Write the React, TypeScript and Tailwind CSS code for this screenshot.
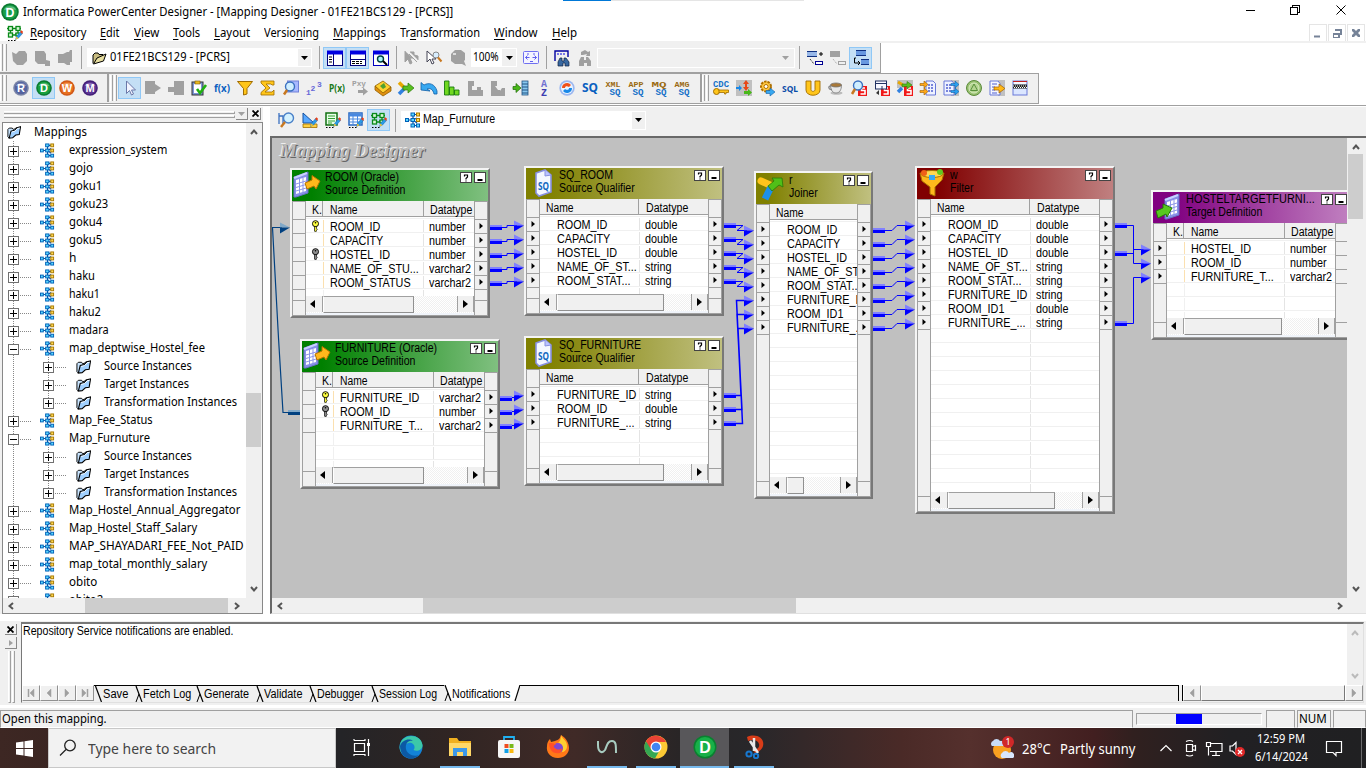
import React, { useLayoutEffect, useRef, useState } from "react";

const UI = "font-['Noto_Sans',sans-serif]";
const SANS = "font-['Liberation_Sans',Arial,sans-serif]";

/* Single-line label squeezed or stretched to a known width. */
function Fit({ w, children, className = "" }: { w: number; children: React.ReactNode; className?: string }) {
  const ref = useRef<HTMLSpanElement>(null);
  const [s, setS] = useState(1);
  useLayoutEffect(() => {
    if (ref.current && ref.current.offsetWidth) setS(w / ref.current.offsetWidth);
  }, [w]);
  return (
    <span className={"block shrink-0 whitespace-nowrap " + className} style={{ width: w }}>
      <span ref={ref} className="inline-block origin-left" style={{ transform: s === 1 ? undefined : `scaleX(${s})` }}>
        {children}
      </span>
    </span>
  );
}

function Ic({ children, s = 16 }: { children: React.ReactNode; s?: number }) {
  return (
    <svg width={s} height={s} viewBox="0 0 16 16" className="block shrink-0 overflow-visible">
      {children}
    </svg>
  );
}

const G = "#a0a0a0";

function Ball({ l, a, b }: { l: string; a: string; b: string }) {
  return (
    <>
      <circle cx="8" cy="8" r="7.8" fill={a} />
      <circle cx="8" cy="8" r="6.3" fill={b} />
      <path d="M2.5 6a6 5 0 0 1 11 0z" fill="#fff" opacity=".3" />
      <text x="8" y="12" textAnchor="middle" fontSize="11" fontWeight="bold" fill="#fff" fontFamily="Liberation Sans">
        {l}
      </text>
    </>
  );
}

const pencil = (
  <>
    <path d="M8.5 14.5 9.5 11.5 13.5 6.5 15.5 8.5 11.5 13z" fill="#2a9be8" stroke="#1766b0" strokeWidth=".5" />
    <path d="M13 7l1.5-1.7 1.5 1.5L15.2 9z" fill="#e8401a" />
    <path d="M8.5 14.5l1-3 2 1.7z" fill="#f5c430" />
  </>
);
const designer = (
  <>
    <g fill="#d8f8d8" stroke="#0a8a1a" strokeWidth="1.3">
      <rect x="1.5" y="1.5" width="4" height="4" />
      <rect x="9" y="1.5" width="4" height="4" />
      <rect x="1.5" y="8" width="4" height="4" />
      <path d="M5.5 3.5H9M5.5 10H9V8M3.5 5.500V8M11 5.500V8M0 3.500h1.500M13 3.500h1" fill="none" />
      <rect x="9" y="8" width="3" height="3" />
    </g>
    {pencil}
    <path d="M1 15.500h1.500M4 15.500h1.500M7 15.500h1.500" stroke="#000" />
  </>
);
const mapIcon = (
  <>
    <path d="M3 8h3M8 3v10M8 2.500h4M8 8l4-2M8 8l4 3M8 13.500h4" stroke="#0a50a0" strokeWidth="1.200" fill="none" />
    <g fill="#59d8ff" stroke="#0060b8">
      <rect x=".5" y="6.500" width="3" height="3" />
      <rect x="6" y="1" width="3.500" height="3" />
      <rect x="6" y="6.500" width="3.500" height="3" />
      <rect x="6" y="12" width="3.500" height="3" />
      <rect x="11.500" y="12" width="3" height="3" />
    </g>
    <g fill="#ffd850" stroke="#a87800">
      <rect x="11.500" y="1" width="3" height="3" />
      <rect x="11.500" y="6.500" width="3" height="3" />
    </g>
  </>
);
const folder = (
  <>
    <path d="M2.500 15L1 13.500V5l1.500-1.500H6L7 5l2-.5L11 2.500" fill="#c8e4ff" stroke="#000" />
    <path d="M2.500 15L4.500 7l4-1L11.500 3l4-1L14 11l-4 .5L6.500 14.500z" fill="#a0d0ff" stroke="#000" strokeWidth="1.200" />
    <path d="M5.500 8l3.500-1 3-3 2.500-.5" stroke="#fff" fill="none" />
  </>
);
const openFolder = (
  <>
    <path d="M1 13.500V5l2-2h3l1 1.500h4V7" fill="#c8bc80" stroke="#000" />
    <path d="M1.500 14 5 8l9-4-2.500 7z" fill="#e8dfa0" stroke="#000" />
  </>
);
const funnel = <path d="M.5 1.500h15L10 8.500v5.500L6.500 15V8.500z" fill="#ffc51a" stroke="#a06c00" />;
const sqText = (t: string) => (
  <>
    <text x="8" y="6.500" textAnchor="middle" fontSize="7.500" textLength="15" lengthAdjust="spacingAndGlyphs" fill="#9a6a10" fontFamily="Liberation Mono" fontWeight="bold">
      {t}
    </text>
    <text x="10" y="15" textAnchor="middle" fontSize="9" textLength="11" lengthAdjust="spacingAndGlyphs" fill="#1470c8" fontFamily="Liberation Mono" fontWeight="bold">
      SQ
    </text>
  </>
);
const blueText = (t: string, c = "#0a60c0", fs = 11) => (
  <text x="8" y="12" textAnchor="middle" fontSize={fs} textLength="16" lengthAdjust="spacingAndGlyphs" fontWeight="bold" fill={c} fontFamily="Noto Sans">
    {t}
  </text>
);
const redS = (
  <>
    <rect x="7" y="6" width="9" height="10" fill="#f01818" />
    <path d="M14 8h-3.500v2.500H14V14H9.500" stroke="#fff" strokeWidth="1.600" fill="none" />
  </>
);

const bar2: React.ReactNode[] = [
  <path d="M4.500 1v12.500l3-3 2 4.500 2-1-2-4h4z" fill="#f2f4ff" stroke="#6b78a8" />,
  <path d="M0 1h10V4l6 4-6 4v2H0z" fill={G} />,
  <path d="M6 1h10v14H6zM0 7h6v5H0z" fill={G} />,
  <><rect x="1" y="2" width="11" height="13" fill="#7d95d8" stroke="#333" /><rect x="3" y="4" width="7" height="9" fill="#fff" /><rect x="4" y="1" width="5" height="3" fill="#e8b820" stroke="#805c00" strokeWidth=".6" /><path d="M6 9l3 4 6-8" fill="none" stroke="#20b010" strokeWidth="2.600" /></>,
  blueText("f(x)"),
  funnel,
  <path d="M1 1h13v4h-2l-1-1H6l4 4-5 4h7l2-2v5H1v-2.500L6 8 1 3z" fill="#ffc51a" stroke="#a06c00" strokeWidth=".8" />,
  <><rect x="4.500" y="1" width="11" height="11" fill="#a8b8ff" stroke="#7080d8" /><circle cx="7" cy="6.500" r="4.500" fill="#cfeeff" stroke="#3a70c0" strokeWidth="1.400" /><path d="M4 10l-3 4.500" stroke="#c87820" strokeWidth="2.500" /></>,
  <><text x="0" y="14.500" fontSize="8" fill="#6868d8" fontFamily="Liberation Mono" fontWeight="bold">1</text><text x="4.500" y="11" fontSize="8" fill="#6868d8" fontFamily="Liberation Mono" fontWeight="bold">2</text><text x="11" y="7" fontSize="8" fill="#6868d8" fontFamily="Liberation Mono" fontWeight="bold">3</text></>,
  blueText("P(x)", "#187818"),
  <><text x="0" y="6" fontSize="7" textLength="14" lengthAdjust="spacingAndGlyphs" fill={G} fontFamily="Liberation Mono" fontWeight="bold">Pxy</text><path d="M6 10h5V7.500l5 4-5 4V13H6z" fill={G} /></>,
  <><path d="M0 6l8-5 8 6-8 7z" fill="#ffd030" stroke="#906000" strokeWidth=".8" /><path d="M0 6v4l8 6 8-5V7l-8 6z" fill="#e09010" stroke="#906000" strokeWidth=".8" /><path d="M5 6l4-3 2 4-3 2z" fill="#50a030" /></>,
  <><path d="M1 2.500l5 5" stroke="#e8a800" strokeWidth="3.500" /><path d="M1 14l5-5" stroke="#3080e0" strokeWidth="3.500" /><path d="M5 6h5V3l6 5-6 5v-3H5z" fill="#58c020" stroke="#2c7808" strokeWidth=".7" /></>,
  <path d="M0 10V2.500L3 5c5-3 11-1 13 6v3h-3c-1-5-4-6-7-5l3 2z" fill="#38a8f0" stroke="#1060a8" strokeWidth=".8" />,
  <><path d="M.5 1h4.500v14H.5zM5.500 7H10v8H5.500zM10.500 10H15v5h-4.500z" fill="#70d820" stroke="#187810" strokeWidth=".9" /></>,
  <path d="M1 1h6v5H5v4h5V7h4v3h2v6H1z" fill={G} />,
  <path d="M1 1h6v5H5l3 4h2v1l2-3h3v8H1z" fill={G} />,
  <><rect x="9" y="1" width="6" height="14" fill="#88c8f0" stroke="#205080" strokeWidth=".8" /><path d="M9 4h6M9 7h6M9 10h6M9 13h6" stroke="#205080" /><path d="M0 6.500h3V3.500L8 8l-5 4.500v-3H0z" fill="#48b818" stroke="#206808" strokeWidth=".7" /></>,
  <><text x="8" y="7" textAnchor="middle" fontSize="10" fontWeight="bold" fill="#7070d0" fontFamily="Liberation Mono">A</text><text x="8" y="15.500" textAnchor="middle" fontSize="10" fontWeight="bold" fill="#3c3cb0" fontFamily="Liberation Mono">Z</text></>,
  <><circle cx="8" cy="8" r="7.700" fill="#9db8f0" /><circle cx="8" cy="8" r="6" fill="#eaf4ff" /><path d="M3 8a5 5 0 0 1 9-3l-2 2c-2-1.500-4-1-4 1z" fill="#f05018" /><path d="M13 8a5 5 0 0 1-9 3l2-2c2 1.500 4 1 4-1z" fill="#1888e8" /></>,
  blueText("SQ", "#0a60c0", 12),
  sqText("XML"),
  sqText("APP"),
  sqText("MQ"),
  sqText("AMG"),
];
const bar3: React.ReactNode[] = [
  <><text x="8" y="7" textAnchor="middle" fontSize="9" textLength="16" lengthAdjust="spacingAndGlyphs" fill="#1470c8" fontWeight="bold" fontFamily="Liberation Mono">CDC</text><circle cx="3.500" cy="11.500" r="3" fill="#ffc51a" stroke="#a06c00" /><path d="M6 10h9.500v2.500H13V14h-1.500v-1.500H6z" fill="#ffc51a" stroke="#a06c00" strokeWidth=".8" /></>,
  <><rect width="16" height="16" fill="#c0c0c0" /><path d="M0 7h3V5l3 3-3 3V9H0z" fill="#1888e8" /><path d="M10 0l3 4h-2v3h2l-3 4-3-4h2V4H7z" fill="#e84818" /><path d="M8 11h4V9l4 3.500-4 3.500v-2H8z" fill="#48b818" /></>,
  <><circle cx="7" cy="6.500" r="5" fill="#ffc840" stroke="#b07000" strokeWidth="2" strokeDasharray="2.500 1" /><circle cx="7" cy="6.500" r="2" fill="#fff" stroke="#b07000" /><path d="M7 10.500h4V8l5 4-5 4v-2.500H7z" fill="#38a8f0" stroke="#1060a8" strokeWidth=".6" /></>,
  blueText("SQL", "#0a4ca8", 9.5),
  <path d="M1 1h5v8.500c0 2.500 4 2.500 4 0V1h5v9c0 7-14 7-14 0z" fill="#ffc51a" stroke="#a06c00" strokeWidth=".9" />,
  <><ellipse cx="8.500" cy="13" rx="6" ry="1.800" fill="#bbb" /><path d="M2.500 5h11c0 5-2 8-5.500 8s-5.500-3-5.500-8z" fill="#e8e8e8" stroke="#777" strokeWidth=".8" /><ellipse cx="8" cy="5" rx="5.500" ry="2" fill="#a87838" stroke="#777" strokeWidth=".8" /><path d="M3 6C0 5.500 0 10 4 9.500" fill="none" stroke="#888" strokeWidth="1.400" /></>,
  <>{redS}<circle cx="7" cy="5.500" r="4.500" fill="#cfeeff" stroke="#3a70c0" strokeWidth="1.400" /><path d="M4 9l-3 5" stroke="#c87820" strokeWidth="2.500" /></>,
  <>{redS}<rect x="1.500" y="1" width="11" height="8" fill="#f8f8ff" stroke="#203060" /><path d="M2 3.500h10M8 6v3" stroke="#203060" /><path d="M2 13l3-3v5z" fill="#333" /></>,
  <><rect width="16" height="8" fill="#c0c0c0" />{redS}<path d="M1 2l5 3" stroke="#e8a800" strokeWidth="3" /><path d="M1 12l4-4" stroke="#3080e0" strokeWidth="3.500" /><path d="M5 4h5V1.500L15 5l-5 4V6.500H5z" fill="#58c020" stroke="#2c7808" strokeWidth=".6" /></>,
  <><path d="M6 1h7l2.500 2.500V15H6z" fill="#eef2ff" stroke="#6878d8" /><path d="M8 5h6M8 8h6M8 11h6" stroke="#5060d0" strokeWidth="1.500" strokeDasharray="2 1" /><path d="M0 3.500h4V1l4 3.500L4 8V5.500H0zM0 10.500h4V8l4 3.500L4 15v-2.500H0z" fill="#ffa818" stroke="#a06000" strokeWidth=".6" /></>,
  <><rect x="8" width="8" height="16" fill="#c0c0c0" /><path d="M1 1h8l2 2.500V15H1z" fill="#eef2ff" stroke="#6878d8" /><path d="M3 5h6M3 8h6M3 11h6" stroke="#5060d0" strokeWidth="1.500" strokeDasharray="2 1" /><path d="M8 3.500h4V1l4 3.500L12 8V5.500H8zM8 10.500h4V8l4 3.500-4 3.500v-2.500H8z" fill="#28a0f0" stroke="#1060a8" strokeWidth=".6" /></>,
  <><circle cx="8" cy="8" r="7.500" fill="#98c070" stroke="#5c8c3c" /><circle cx="8" cy="8" r="5" fill="#b4d490" stroke="#d8ecc0" /><path d="M8 4l3.500 6.500h-7z" fill="none" stroke="#58903c" /></>,
  <><rect x="9" width="7" height="16" fill="#c0c0c0" /><path d="M1 1h8l2 2.500V15H1z" fill="#f4f6ff" stroke="#6878d8" /><path d="M3 4h5M3 7h3M3 10h3M3 13h5" stroke="#5060d0" /><path d="M5 7h5V4l6 4.500L10 13v-3H5z" fill="#ffb818" stroke="#a06000" strokeWidth=".7" /></>,
  <><rect x="1" y="1" width="14" height="14" fill="#dbe6ff" stroke="#6878d8" /><path d="M1 1.500h14" stroke="#c02020" /><path d="M2 3h12" stroke="#fff" strokeWidth="1.500" /><rect x="1" y="4.500" width="14" height="4" fill="#222" /><path d="M1 6h14M2 7.500h13" stroke="#fff" strokeDasharray="1 1" /></>,
];

const ballDefs = [
  { l: "R", a: "#7c86a8", b: "#5563a0" },
  { l: "D", a: "#0a7a30", b: "#18a040" },
  { l: "W", a: "#d05818", b: "#e87020" },
  { l: "M", a: "#442078", b: "#5c3494" },
];
const canvasIcons = [
  <><path d="M0 1v11M0 4h4v8M4 8h3" stroke="#3a70c0" fill="none" strokeWidth="1.300" /><circle cx="9.500" cy="6" r="5" fill="#d4f2ff" stroke="#4a80c8" strokeWidth="1.400" /><path d="M6 10l-4 5" stroke="#c87820" strokeWidth="2.400" /></>,
  <><path d="M1 1v10h11z" fill="#58a8ff" stroke="#1450a0" /><path d="M1 12h14v3.500H1z" fill="#ffd040" stroke="#a07000" strokeWidth=".8" />{pencil}</>,
  <><rect x="1" y="1" width="11" height="12" fill="#e8ffe8" stroke="#107010" strokeWidth="1.500" /><path d="M3 4h7M3 6.500h7M3 9h7M3 11h4" stroke="#30a030" />{pencil}<path d="M1 15.500h1.500M4 15.500h1.500M7 15.500h1.500" stroke="#000" /></>,
  <><rect x="1" y="1" width="13" height="12" fill="#fff" stroke="#2868c0" strokeWidth="1.500" /><path d="M1 3h13" stroke="#4888e0" strokeWidth="3" /><path d="M1 7h13M1 10h13M5 3v10M9.500 3v10" stroke="#4888e0" />{pencil}<path d="M1 15.500h1.500M4 15.500h1.500M7 15.500h1.500" stroke="#000" /></>,
  designer,
];

function Cell({ children, on = false }: { children: React.ReactNode; on?: boolean }) {
  return (
    <div className={"flex h-[22px] w-[23px] shrink-0 items-center justify-center " + (on ? "border border-[#90c8f6] bg-[#c4dff5]" : "")}>
      <Ic>{children}</Ic>
    </div>
  );
}
const Grip = () => (
  <div className="flex shrink-0 gap-px self-stretch py-px">
    <div className="w-[3px] border-r border-l border-r-[#a0a0a0] border-l-white" />
    <div className="w-[3px] border-r border-l border-r-[#a0a0a0] border-l-white" />
  </div>
);
const Sep = ({ className = "" }) => <div className={"h-[23px] w-px shrink-0 bg-[#a0a0a0] " + className} />;
const Down = ({ c = "#000" }) => (
  <svg width="7" height="4" viewBox="0 0 7 4" className="block"><path d="M0 0h7L3.500 4z" fill={c} /></svg>
);
const Chev = ({ d, c = "#555", s = 8 }: { d: "u" | "d" | "l" | "r"; c?: string; s?: number }) => (
  <svg width={s} height={s} viewBox="0 0 8 8" className="block">
    <path d={{ u: "M1 6l3-3.500L7 6", d: "M1 2l3 3.500L7 2", l: "M6 1L2.500 4 6 7", r: "M2 1l3.500 3L2 7" }[d]} fill="none" stroke={c} strokeWidth="2" />
  </svg>
);

const menus: [string, number, number][] = [
  ["Repository", 0, 56], ["Edit", 0, 20], ["View", 0, 25], ["Tools", 0, 27], ["Layout", 0, 36],
  ["Versioning", 6, 55], ["Mappings", 0, 53], ["Transformation", 2, 80], ["Window", 0, 44], ["Help", 0, 25],
];

function TopBars() {
  return (
    <div className={"flex h-[107px] shrink-0 flex-col bg-white text-[12px] leading-[16px] text-black " + UI}>
      <div className="flex h-[24px] items-start">
        <div className="flex h-[24px] w-[563px] items-center pl-px">
          <Ic s={18}><Ball l="D" a="#0a7a30" b="#18a048" /></Ic>
          <Fit w={430} className="pl-[4px]">Informatica PowerCenter Designer - [Mapping Designer - 01FE21BCS129 - [PCRS]]</Fit>
        </div>
        <div className="h-px w-[48px] bg-[#0078d7]" />
        <div className="h-px w-[193px] bg-[#e5e5e5]" />
        <svg width="120" height="20" viewBox="0 0 120 20" className="ml-auto block" shapeRendering="crispEdges">
          <g stroke="#000" fill="none">
            <path d="M-1 10.500h10M44.500 7.500h7v7h-7zM46.500 7.500v-2h7v7h-2" />
            <path d="M90.500 5.500l9 9M99.500 5.500l-9 9" shapeRendering="auto" />
          </g>
        </svg>
      </div>
      <div className="flex h-[17px] items-center pl-[7px]">
        <Ic>{designer}</Ic>
        <div className="flex gap-[14px] pl-[7px]">
          {menus.map(([t, u, w]) => (
            <Fit key={t} w={w}>
              {t.slice(0, u)}
              <span className="underline underline-offset-2">{t[u]}</span>
              {t.slice(u + 1)}
            </Fit>
          ))}
        </div>
        <div className="ml-auto flex gap-px pr-px">
          {["M4 10.500h6v2H4z", "M6 4h7v6h-2V6H6zM4 8h7v5H4zM5 10v2h4v-2z", "M4 4h2l2 2 2-2h2v2l-2 2 2 2v2h-2l-2-2-2 2H4v-2l2-2-2-2z"].map((d) => (
            <div key={d} className="flex h-[18px] w-[18px] items-center justify-center border border-[#e5e5e5]">
              <Ic><path d={d} fill="#768398" fillRule="evenodd" /></Ic>
            </div>
          ))}
        </div>
      </div>
      <div className="h-[2px] shrink-0 bg-[#f0f0f0]" />
      <div className="flex h-[29px] w-[881px] shrink-0 items-center border-r border-[#a0a0a0] bg-[#f0f0f0]">
        <Grip />
        <div className="flex gap-[7px] pl-[4px]">
          <Ic><path d="M1 2l4 2 3-3h6l2 3v7l-4 4H6l-4-4z" fill={G} /></Ic>
          <Ic><path d="M1 1h9l2 3v6l4 1v5h-5v-2H4l-3-3z" fill={G} /></Ic>
          <Ic><path d="M1 4h5l4-2h2l1-2h2v12h-2v3h-3l-3-2H1z" fill={G} /></Ic>
        </div>
        <Sep className="mx-[5px] ml-[8px]" />
        <div className="flex h-[19px] w-[225px] items-center border border-white bg-white pl-[4px]">
          <Ic>{openFolder}</Ic>
          <Fit w={120} className="-mt-[2px] ml-[2px]">01FE21BCS129 - [PCRS]</Fit>
          <div className="ml-auto flex h-[17px] w-[13px] items-center justify-center bg-[#f0f0f0]"><Down /></div>
        </div>
        <Sep className="mr-[3px] ml-[7px]" />
        <Cell on><rect x=".5" y="1.500" width="15" height="14" fill="#fff" stroke="#00007c" /><path d="M0 2.500h16" stroke="#0000e0" strokeWidth="4" /><path d="M6.500 4v12" stroke="#00007c" /><path d="M2 7h3M2 9.500h3M2 12h3" stroke="#000" /></Cell>
        <Cell on><rect x=".5" y="1.500" width="15" height="14" fill="#fff" stroke="#00007c" /><path d="M0 2.500h16" stroke="#0000e0" strokeWidth="4" /><path d="M0 9.500h16" stroke="#00007c" /><path d="M2 11.500h10M2 13.500h10" stroke="#000" strokeDasharray="3 1" /></Cell>
        <Cell><rect x=".5" y="1.500" width="15" height="14" fill="#fff" stroke="#0000c0" /><path d="M0 2.500h16" stroke="#0000e0" strokeWidth="4" /><circle cx="7.500" cy="9" r="3" fill="#a8f8f8" stroke="#004040" strokeWidth="1.400" /><path d="M10 11l4 4" stroke="#000" strokeWidth="2" /></Cell>
        <Sep className="mr-[2px] ml-[4px]" />
        <Cell><path d="M2 1v11l3-3 2 5 2-1-2-5h3L6 4l8 8M7 2h4v3l4 1v4" fill={G} stroke={G} /></Cell>
        <Cell><path d="M1 1v11l3-3 2 5 2-1-2-4h4z" fill="#fff" stroke="#445" /><circle cx="10" cy="5" r="3" fill="#d8eeff" stroke="#888" /><path d="M12 7.500l3.500 4" stroke="#c87820" strokeWidth="2" /></Cell>
        <div className="w-px" />
        <Cell><path d="M5 0h6l4 3v7l-1 1 2 5-4-2H5l-4-3V4z" fill={G} /><path d="M3 3h3v2H3z" fill="#ddd" /></Cell>
        <div className="ml-[2px] flex h-[19px] w-[46px] items-center bg-white pl-[2px]">
          <Fit w={26} className="-mt-[2px]">100%</Fit>
          <div className="mr-px ml-auto flex h-[17px] w-[14px] items-center justify-center bg-[#f0f0f0]"><Down /></div>
        </div>
        <div className="w-[2px]" />
        <Cell><rect x=".5" y="1.500" width="15" height="12" rx="1" fill="#f4f4ff" stroke="#7070f0" /><path d="M2.500 7.500h4M9.500 7.500h4M4.500 5.500l-2 2 2 2M11.500 5.500l2 2-2 2M4 4h2M10 4h2M7 11.500h3" stroke="#6060f0" fill="none" /></Cell>
        <Sep className="mr-[3px] ml-[4px]" />
        <Cell><path d="M1 11V1h13v6" fill="none" stroke="#0000a0" strokeWidth="1.400" /><path d="M3 4h9" stroke="#0000e0" strokeDasharray="2 1" /><path d="M4 16v-4l2-4h2v3h2V8h2l3 4v4h-4v-3h-2v3z" fill="#3868a0" stroke="#102040" strokeWidth=".7" /></Cell>
        <Cell><path d="M2 16v-5l2-4h3v3h2V7h2l3 4v5h-4v-3H7v3zM4 5V2l4-2 3 2 2-1v5H9l1-2-4 1z" fill={G} /></Cell>
        <div className="ml-[1px] flex h-[20px] w-[198px] items-center justify-end border border-white pr-[5px]"><Down c="#a0a0a0" /></div>
        <Sep className="mr-[3px] ml-[4px]" />
        <Cell><rect x="0" y="1" width="10" height="6" fill="#98b8e8" /><path d="M0 1.500h10M0 6.500h10" stroke="#103080" /><path d="M12 4h4M14 2v4" stroke="#000" /><path d="M3 9l4 5" stroke="#000" strokeDasharray="1 1" /><rect x="8.500" y="11.500" width="7" height="3" fill="#fff" stroke="#000090" /></Cell>
        <Cell><rect x="0" y="1" width="10" height="6" fill={G} /><path d="M3 9l4 5" stroke={G} strokeDasharray="1 1" /><rect x="8.500" y="11.500" width="7" height="3" fill="none" stroke={G} /></Cell>
        <Cell on><rect x="3" y="0" width="10" height="6" fill="#6898e0" /><path d="M3 .5h10M3 5.500h10" stroke="#103080" /><path d="M3 8H1.500v5H7M5 11l2 2-2 2" stroke="#000" fill="none" /><rect x="8" y="9" width="8" height="6" fill="#6898e0" /><path d="M8 9.500h8M8 14.500h8" stroke="#103080" /></Cell>
      </div>
      <div className="h-px w-[881px] shrink-0 bg-[#a0a0a0]" />
      <div className="flex h-[31px] w-[1039px] shrink-0 items-center border-t border-r border-b border-[#a0a0a0] bg-[#f0f0f0] pb-px">
        <Grip />
        <div className="flex w-[100px] pl-[2px]">
          {ballDefs.map((b, i) => (
            <Cell key={b.l} on={i === 1}><Ball {...b} /></Cell>
          ))}
        </div>
        <div className="h-full w-[2px] shrink-0 bg-[#a0a0a0]" />
        <div className="ml-px flex self-stretch"><Grip /></div>
        <div className="flex w-[583px] shrink-0 pl-[1px]">
          {bar2.map((c, i) => (
            <Cell key={i} on={i === 0}>{c}</Cell>
          ))}
        </div>
        <div className="h-full w-[2px] shrink-0 bg-[#a0a0a0]" />
        <div className="flex self-stretch"><Grip /></div>
        <div className="flex">
          {bar3.map((c, i) => (
            <Cell key={i}>{c}</Cell>
          ))}
        </div>
      </div>
      <div className="h-px shrink-0 bg-white" />
      <div className="h-px shrink-0 bg-[#a0a0a0]" />
    </div>
  );
}

/* label, width, level, expanded */
const tree: [string, number, number, boolean?][] = [
  ["expression_system", 98, 1], ["gojo", 24, 1], ["goku1", 33, 1], ["goku23", 39, 1], ["goku4", 33, 1], ["goku5", 33, 1],
  ["h", 7, 1], ["haku", 26, 1], ["haku1", 31, 1], ["haku2", 32, 1], ["madara", 40, 1],
  ["map_deptwise_Hostel_fee", 136, 1, true], ["Source Instances", 88, 2], ["Target Instances", 85, 2], ["Transformation Instances", 133, 2],
  ["Map_Fee_Status", 84, 1], ["Map_Furnuture", 81, 1, true],
  ["Source Instances", 88, 2], ["Target Instances", 85, 2], ["Transformation Instances", 133, 2],
  ["Map_Hostel_Annual_Aggregator", 171, 1], ["Map_Hostel_Staff_Salary", 128, 1], ["MAP_SHAYADARI_FEE_Not_PAID", 174, 1],
  ["map_total_monthly_salary", 138, 1], ["obito", 28, 1], ["obito2", 34, 1],
];

function TreeRow({ t, w, level, open, last }: { t: string; w: number; level: number; open?: boolean; last?: boolean }) {
  const pw = level === 1 ? 37 : 73;
  return (
    <div className="flex h-[18px] shrink-0 items-center">
      <svg width={pw} height="18" viewBox={`0 0 ${pw} 18`} className="block shrink-0" shapeRendering="crispEdges">
        <path d="M10.500 0v18" stroke="#888" strokeDasharray="1 1" />
        {level === 2 && <path d={last ? "M45.500 0v9" : "M45.500 0v18"} stroke="#888" strokeDasharray="1 1" />}
        <g transform={level === 2 ? "translate(35 0)" : undefined}>
          <path d="M17 10.500h12" stroke="#888" strokeDasharray="1 1" />
          <rect x="5.500" y="5.500" width="10" height="10" fill="#fff" stroke="#707070" />
          <path d={open ? "M7 10.500h7" : "M7 10.500h7M10.500 7v7"} stroke="#000" />
        </g>
      </svg>
      <svg width="15" height="15" viewBox="0 0 16 16" className="block shrink-0">{level === 1 ? mapIcon : folder}</svg>
      <Fit w={w} className={"-mt-[2px] " + (level === 1 ? "ml-[14px]" : "ml-[13px]")}>{t}</Fit>
    </div>
  );
}

function TreePanel() {
  return (
    <div className={"flex w-[263px] shrink-0 flex-col bg-[#f0f0f0] pl-[2px] text-[12px] leading-[17px] text-black " + UI}>
      <div className="flex h-[15px] shrink-0 items-center pb-px pl-[2px]">
        <div className="flex w-[231px] flex-col gap-px">
          <div className="h-[3px] border-t border-r border-b border-t-white border-r-[#a0a0a0] border-b-[#a0a0a0]" />
          <div className="h-[3px] border-t border-r border-b border-t-white border-r-[#a0a0a0] border-b-[#a0a0a0]" />
        </div>
        <div className="ml-px flex h-[12px] w-[12px] items-center justify-center border-r border-b border-[#888]"><Down c="#a0a0a0" /></div>
        <div className="ml-[2px] flex h-[12px] w-[11px] items-center justify-center border-r border-b border-[#888]">
          <svg width="7" height="7" viewBox="0 0 7 7" className="block"><path d="M.5.5l6 6M6.500.5l-6 6" stroke="#000" strokeWidth="1.800" /></svg>
        </div>
      </div>
      <div className="flex h-[492px] flex-col border border-[#888]">
        <div className="flex h-[475px] shrink-0">
          <div className="flex w-[243px] flex-col overflow-hidden bg-white">
            <div className="flex h-[18px] shrink-0 items-center pl-[4px]">
              <svg width="14" height="14" viewBox="0 0 16 16" className="block">{folder}</svg>
              <Fit w={53} className="-mt-[2px] ml-[13px]">Mappings</Fit>
            </div>
            {tree.map(([t, w, l, o], i) => (
              <TreeRow key={i} t={t} w={w} level={l} open={o} last={t.startsWith("Transf")} />
            ))}
          </div>
          <div className="flex w-[15px] flex-col items-center bg-[#f0f0f0] py-[5px]">
            <Chev d="u" />
            <div className="mt-[257px] h-[54px] w-[15px] shrink-0 bg-[#cdcdcd]" />
            <div className="flex grow items-end"><Chev d="d" /></div>
          </div>
        </div>
        <div className="flex h-[15px] items-center pl-[4px]">
          <Chev d="l" />
          <div className="ml-[70px] h-[15px] w-[143px] bg-[#cdcdcd]" />
          <div className="ml-[5px]"><Chev d="r" /></div>
        </div>
      </div>
    </div>
  );
}

const themes: Record<string, string> = {
  green: "bg-[linear-gradient(90deg,#008000_10%,#80c080)]",
  olive: "bg-[linear-gradient(90deg,#808000_10%,#c0c080)]",
  red: "bg-[linear-gradient(90deg,#800000_10%,#c08080)]",
  purple: "bg-[linear-gradient(90deg,#800080_10%,#c080c0)]",
};

const tableGlyph = (x: number) => (
  <g transform={`translate(${x} 0)`}>
    <path d="M1 7l14-5v21L3 27H1z" fill="#8890e8" stroke="#6870c8" />
    <path d="M3 10l10-3v14L3 24z" fill="#fff" />
    <path d="M3 14l10-3M3 17.500l10-3M3 21l10-3M6.500 9v14M10 8v14" stroke="#8c96e8" />
    <path d="M1 8l13-5" stroke="#c8d0ff" strokeWidth="2" />
  </g>
);
const nodeIcons: Record<string, React.ReactNode> = {
  source: <>{tableGlyph(1)}<path d="M13 13l7-3V5.500l8 5.500-4 8-2-3-7 3z" fill="#ffb81c" stroke="#b87400" /></>,
  target: <>{tableGlyph(11)}<path d="M3 19l7-3v-4l9 4-5 9-1-3-8 4z" fill="#58c820" stroke="#287808" /></>,
  sq: <><path d="M10 5l9-3 6 5v17L13 28l-3-3z" fill="#f4f8ff" stroke="#8890e0" strokeWidth="1.600" /><path d="M19 2v6l6-1" fill="#b8c4ff" stroke="#8890e0" /><text x="17.500" y="22" textAnchor="middle" fontSize="11" textLength="11" lengthAdjust="spacingAndGlyphs" fontWeight="bold" fill="#1068c0" fontFamily="Noto Sans">SQ</text></>,
  joiner: <><path d="M5 8l9 4" stroke="#ffc41c" strokeWidth="7" strokeLinecap="round" /><path d="M15 14L9 26" stroke="#1c90e8" strokeWidth="7" /><path d="M12 13l6-5-2-3h10l1 9-4-2-7 6z" fill="#50c018" stroke="#287808" strokeWidth=".8" /></>,
  filter: <><path d="M3 5h24l-2 7-7 7v9l-5-2v-7L5 13z" fill="#ffb81c" stroke="#a87000" /><ellipse cx="15" cy="6" rx="11" ry="3.500" fill="#ffd850" stroke="#a87000" /><circle cx="7" cy="5" r="3" fill="#f06018" /><circle cx="23" cy="4" r="3" fill="#60c820" /><rect x="12" y="7" width="6" height="5" fill="#38a8f0" /></>,
};

type Col = [string, string, string?];
interface NodeDef {
  x: number; y: number; w: number; h: number; title: string; sub: string; theme: string; icon: string;
  inPorts: boolean; outPorts: boolean; keys: boolean; type: boolean; thumb: number; rows: Col[];
}
const R: Record<string, Col> = {
  room: ["ROOM_ID", "double"], cap: ["CAPACITY", "double"], hostel: ["HOSTEL_ID", "double"],
  nos: ["NAME_OF_ST...", "string"], rs: ["ROOM_STAT...", "string"],
};
const nodes: NodeDef[] = [
  { x: 290, y: 168, w: 200, h: 150, title: "ROOM (Oracle)", sub: "Source Definition", theme: "green", icon: "source", inPorts: false, outPorts: true, keys: true, type: true, thumb: 91,
    rows: [["ROOM_ID", "number", "y"], ["CAPACITY", "number"], ["HOSTEL_ID", "number", "g"], ["NAME_OF_STU...", "varchar2"], ["ROOM_STATUS", "varchar2"]] },
  { x: 300, y: 339, w: 200, h: 150, title: "FURNITURE (Oracle)", sub: "Source Definition", theme: "green", icon: "source", inPorts: false, outPorts: true, keys: true, type: true, thumb: 91,
    rows: [["FURNITURE_ID", "varchar2", "y"], ["ROOM_ID", "number", "g"], ["FURNITURE_T...", "varchar2"]] },
  { x: 524, y: 166, w: 200, h: 150, title: "SQ_ROOM", sub: "Source Qualifier", theme: "olive", icon: "sq", inPorts: true, outPorts: true, keys: false, type: true, thumb: 107,
    rows: [R.room, R.cap, R.hostel, R.nos, R.rs] },
  { x: 524, y: 336, w: 200, h: 150, title: "SQ_FURNITURE", sub: "Source Qualifier", theme: "olive", icon: "sq", inPorts: true, outPorts: true, keys: false, type: true, thumb: 107,
    rows: [["FURNITURE_ID", "string"], ["ROOM_ID", "double"], ["FURNITURE_...", "string"]] },
  { x: 754, y: 171, w: 119, h: 328, title: "r", sub: "Joiner", theme: "olive", icon: "joiner", inPorts: true, outPorts: true, keys: false, type: false, thumb: 17,
    rows: [R.room, R.cap, R.hostel, R.nos, R.rs, ["FURNITURE_ID", ""], ["ROOM_ID1", ""], ["FURNITURE_...", ""]] },
  { x: 915, y: 166, w: 200, h: 348, title: "w", sub: "Filter", theme: "red", icon: "filter", inPorts: true, outPorts: true, keys: false, type: true, thumb: 107,
    rows: [R.room, R.cap, R.hostel, R.nos, R.rs, ["FURNITURE_ID", "string"], ["ROOM_ID1", "double"], ["FURNITURE_...", "string"]] },
  { x: 1151, y: 190, w: 200, h: 150, title: "HOSTELTARGETFURNI...", sub: "Target Definition", theme: "purple", icon: "target", inPorts: true, outPorts: false, keys: true, type: true, thumb: 98,
    rows: [["HOSTEL_ID", "number"], ["ROOM_ID", "number"], ["FURNITURE_T...", "varchar2"]] },
];

const Sq = ({ children, className = "scale-x-[0.88]" }: { children: React.ReactNode; className?: string }) => (
  <span className={"block w-max origin-left whitespace-nowrap " + className}>{children}</span>
);

function PortCol({ n, on }: { n: number; on: boolean }) {
  return (
    <div className="flex w-[14px] shrink-0 flex-col border-x border-t border-[#a0a0a0] bg-[#f0f0f0]">
      <div className="h-[18px] shrink-0 border-b border-[#a0a0a0]" />
      {Array.from({ length: n }, (_, i) => (
        <div key={i} className="flex h-[14px] shrink-0 items-center justify-center border-b border-[#a0a0a0]">
          {on && <svg width="4" height="6" viewBox="0 0 4 6" className="mb-[1px] block"><path d="M.5 0L4 3 .5 6z" fill="#000" /></svg>}
        </div>
      ))}
      <div className="grow border-b border-[#a0a0a0]" />
      <div className="h-[15px] shrink-0 border-b border-[#a0a0a0]" />
    </div>
  );
}

const SmallBtn = ({ d }: { d: React.ReactNode }) => (
  <div className="flex h-[11px] w-[12px] items-center justify-center border border-[#444] bg-white">
    <svg width="8" height="8" viewBox="0 0 8 8" className="block">{d}</svg>
  </div>
);

function NodeBox({ n }: { n: NodeDef }) {
  const bodyRows = Math.ceil((n.h - 72) / 14);
  return (
    <div
      className={"absolute flex flex-col border-t-2 border-r-2 border-b-2 border-l-2 border-t-[#f4f4f4] border-r-[#787878] border-b-[#787878] border-l-[#f4f4f4] bg-[#f0f0f0] text-[12px] leading-[13px] text-black " + SANS}
      style={{ left: n.x - 272, top: n.y - 138, width: n.w, height: n.h }}
    >
      <div className={"flex h-[31px] shrink-0 " + themes[n.theme]}>
        <svg width="30" height="30" viewBox="0 0 30 30" className="block shrink-0">{nodeIcons[n.icon]}</svg>
        <div className="min-w-0 grow pt-px pl-[3px]">
          <Sq className={n.icon === "target" ? "scale-x-[0.91]" : "scale-x-[0.88]"}>{n.title}</Sq>
          <Sq>{n.sub}</Sq>
        </div>
        <div className="flex shrink-0 gap-[2px] pt-[2px] pr-[2px]">
          <SmallBtn d={<path d="M2.500 2.500V1h3v2L4 4.500V5.500M4 6.500v1" stroke="#000" strokeWidth="1.200" fill="none" />} />
          <SmallBtn d={<path d="M1.500 6h5" stroke="#000" strokeWidth="2" />} />
        </div>
      </div>
      <div className="flex min-h-0 grow">
        <PortCol n={n.rows.length} on={n.inPorts} />
        <div className="flex min-w-0 grow flex-col overflow-hidden bg-white">
          <div className="flex h-[16px] shrink-0 items-center border-b border-[#a0a0a0] bg-[#f0f0f0]">
            {n.keys && <div className="h-full w-[17px] shrink-0 border-r border-[#a0a0a0] pt-[3px] pl-[6px]"><Sq>K.</Sq></div>}
            <div className={"h-full shrink-0 overflow-hidden pt-[3px] " + (n.keys ? "w-[101px] border-r border-[#a0a0a0] pl-[7px]" : n.type ? "w-[99px] border-r border-[#a0a0a0] pl-[6px]" : "w-[90px] pl-[6px]")}>
              <Sq className="scale-x-[0.86]">Name</Sq>
            </div>
            {n.type && <div className={"h-full pt-[3px] " + (n.keys ? "pl-[6px]" : "pl-[7px]")}><Sq>Datatype</Sq></div>}
          </div>
          <div className="h-[2px] shrink-0 border-b border-[#f0f0f0]" />
          <div className="min-h-0 grow overflow-hidden">
            {Array.from({ length: bodyRows }, (_, i) => {
              const r = n.rows[i];
              return (
                <div key={i} className="flex h-[14px] border-b border-[#f0f0f0] pt-px">
                  {n.keys && (
                    <div className={"w-[18px] shrink-0 border-r pl-[5px] " + (r ? "border-[#fbe0b0]" : "border-[#f0f0f0]")}>
                      {r && r[2] && (
                        <svg width="9" height="12" viewBox="0 0 9 13" className="block">
                          <circle cx="4.500" cy="4" r="3.300" fill={r[2] === "y" ? "#ffff40" : "#909090"} stroke="#000" />
                          <circle cx="4.500" cy="3" r=".9" />
                          <path d="M3.500 7v5l1 1 1-1v-1l1-1-1-1V7z" fill={r[2] === "y" ? "#ffff40" : "#909090"} stroke="#000" strokeWidth=".8" />
                        </svg>
                      )}
                    </div>
                  )}
                  <div className={"shrink-0 " + (n.keys ? "w-[100px] border-r border-[#e4e4e4] pl-[6px]" : n.type ? "w-[100px] border-r border-[#e4e4e4] pl-[17px]" : "w-[88px] pl-[17px]")}>
                    {r && <Sq className="mt-px scale-x-[0.9]">{r[0]}</Sq>}
                  </div>
                  {n.type && r && <div className="pt-[1px] pl-[5px]"><Sq className="scale-x-[0.9]">{r[1]}</Sq></div>}
                </div>
              );
            })}
          </div>
          <div className="flex h-[17px] shrink-0 bg-[repeating-conic-gradient(#f0f0f0_0_25%,#fff_0_50%)] bg-[length:2px_2px]">
            <div className="flex h-[16px] w-[17px] shrink-0 items-center justify-center border-r border-[#a0a0a0] bg-[#f0f0f0] pr-[3px]">
              <svg width="5" height="8" viewBox="0 0 5 8"><path d="M5 0v8L0 4z" /></svg>
            </div>
            <div className="shrink-0 border-t border-r border-b border-l border-t-[#a0a0a0] border-r-[#909090] border-b-[#909090] border-l-white bg-[#f0f0f0]" style={{ width: n.thumb }} />
            <div className="ml-auto flex h-[16px] w-[17px] shrink-0 items-center justify-center border-r border-l border-[#a0a0a0] bg-[#f0f0f0]">
              <svg width="5" height="8" viewBox="0 0 5 8"><path d="M0 0v8L5 4z" /></svg>
            </div>
          </div>
          <div className="h-[3px] shrink-0 border-b border-[#a0a0a0] bg-[#f0f4fa]" />
        </div>
        <PortCol n={n.rows.length} on={n.outPorts} />
      </div>
    </div>
  );
}

const BL = "#0000ff";
const LB = "#8080ff";
const Bar = ({ x, y }: { x: number; y: number }) => (
  <g><rect x={x} y={y - 2} width="12" height="2" fill={LB} /><rect x={x} y={y} width="12" height="3" fill={BL} /></g>
);
const Tip = ({ x, y, a = LB, b = BL }: { x: number; y: number; a?: string; b?: string }) => (
  <g><path d={`M${x - 10} ${y - 5}L${x} ${y}H${x - 10}z`} fill={a} /><path d={`M${x - 10} ${y}H${x}L${x - 10} ${y + 6}z`} fill={b} /></g>
);
const seq = (n: number) => Array.from({ length: n }, (_, i) => i * 14);

function Links() {
  return (
    <svg width="1075" height="460" viewBox="272 138 1075 460" className="absolute top-0 left-0 block">
      <g fill="none" stroke={BL} strokeWidth="1">
        {seq(5).map((d) => <path key={d} d={`M502 ${227.5 + d}h5v-2h10`} />)}
        {seq(3).map((d) => <path key={d} d={`M512 ${397.5 + d}h3v-2h4`} />)}
        {seq(5).map((d) => <path key={d} d={`M736 ${225.5 + d}h7l-6 5h10`} />)}
        {seq(8).map((d) => <path key={d} d={`M885 ${230.5 + d}h7l5-5h10`} />)}
        <path d="M736 395.500h5L736.500 300.500h10M736 409.500h6L737 314.500h10M736 423.500h6.500L738 328.500h10" strokeWidth="1.500" />
        <path d="M1127 225.500h6.500v38h10M1127 253.500h6.500v-4h10M1127 323.500h6.500v-46h10" />
      </g>
      {seq(5).map((d) => <g key={d}><Bar x={490} y={227 + d} /><Tip x={524} y={225.5 + d} /><Bar x={724} y={225 + d} /></g>)}
      {seq(3).map((d) => <g key={d}><Bar x={500} y={398 + d} /><Tip x={524} y={395.5 + d} /><Bar x={724} y={395 + d} /></g>)}
      {seq(8).map((d) => <g key={d}><Tip x={754} y={230.5 + d} /><Bar x={873} y={230 + d} /><Tip x={915} y={225.5 + d} /></g>)}
      <Bar x={1115} y={225} /><Bar x={1115} y={253} /><Bar x={1115} y={323} />
      <Tip x={1151} y={249.5} /><Tip x={1151} y={263.5} /><Tip x={1151} y={277.5} />
      <path d="M288 412.500h-5L278.500 338 272.500 227.500H282" fill="none" stroke="#004080" strokeWidth="1.200" />
      <rect x="288" y="410" width="12" height="2" fill="#80a8c8" />
      <rect x="288" y="412" width="12" height="3" fill="#004080" />
      <Tip x={290} y={227.5} a="#80a8c8" b="#004080" />
    </svg>
  );
}

function Workspace() {
  return (
    <div className="flex w-[1096px] shrink-0 flex-col bg-[#f0f0f0]">
      <div className={"flex h-[29px] shrink-0 items-center pb-[3px] pl-[5px] text-[12px] " + UI}>
        {canvasIcons.map((c, i) => <Cell key={i} on={i === 4}>{c}</Cell>)}
        <Sep className="mr-[5px] ml-[5px]" />
        <div className="flex h-[19px] w-[245px] items-center bg-white pl-[4px]">
          <Ic>{mapIcon}</Ic>
          <Fit w={72} className={"-mt-[2px] ml-[2px] text-[12px] " + SANS}>Map_Furnuture</Fit>
          <div className="mr-px ml-auto flex h-[17px] w-[13px] items-center justify-center bg-[#f0f0f0]"><Down /></div>
        </div>
      </div>
      <div className="flex h-[462px] shrink-0 border-t-2 border-l-2 border-t-[#696969] border-l-[#696969]">
        <div className="relative h-[460px] w-[1075px] shrink-0 overflow-hidden bg-[#c0c0c0]">
          <div className="px-[8px] pt-[2px] font-['Liberation_Serif',serif] text-[19px] leading-[22px] font-bold text-[#b8b8b8] italic [text-shadow:1px_1px_0_#666,-1px_-1px_0_#eee]">
            <Fit w={145}>Mapping Designer</Fit>
          </div>
          <Links />
          {nodes.map((n) => <NodeBox key={n.title} n={n} />)}
        </div>
        <div className="flex w-[17px] shrink-0 flex-col items-center bg-[#f0f0f0] pt-[5px]">
          <Chev d="u" />
          <div className="mt-[3px] mr-[1px] h-[65px] w-[15px] bg-[#cdcdcd]" />
          <div className="mt-auto mb-[5px]"><Chev d="d" /></div>
        </div>
      </div>
      <div className="flex h-[16px] items-center border-b border-l-2 border-b-[#e0e0e0] border-l-[#696969] pl-[4px]">
        <Chev d="l" />
        <div className="ml-[139px] h-[15px] w-[373px] bg-[#cdcdcd]" />
        <div className="mr-[22px] ml-auto"><Chev d="r" /></div>
      </div>
    </div>
  );
}

/* label, text width, tab width */
const tabs: [string, number, number][] = [["Save", 25, 41], ["Fetch Log", 48, 61], ["Generate", 45, 60], ["Validate", 38, 53], ["Debugger", 47, 62], ["Session Log", 58, 73], ["Notifications", 58, 70]];

const NavBtn = ({ d }: { d: string }) => (
  <div className="flex h-[16px] w-[18px] items-center justify-center border border-t-white border-r-[#909090] border-b-[#909090] border-l-white bg-[#f0f0f0]">
    <svg width="8" height="8" viewBox="0 0 8 8"><path d={d} fill="#a0a0a0" stroke="#a0a0a0" strokeWidth=".5" /></svg>
  </div>
);

function Output() {
  return (
    <div className={"mt-[7px] flex h-[84px] shrink-0 bg-[#f0f0f0] text-[12px] leading-[14px] text-black " + SANS}>
      <div className="flex w-[21px] shrink-0 flex-col items-start gap-[2px] pt-[3px] pl-[5px]">
        <div className="flex h-[11px] w-[12px] items-center justify-center border-r border-b border-[#888]">
          <svg width="7" height="7" viewBox="0 0 7 7"><path d="M.5.5l6 6M6.500.5l-6 6" stroke="#000" strokeWidth="1.800" /></svg>
        </div>
        <div className="flex h-[12px] w-[12px] items-center justify-center border-r border-b border-[#888]">
          <svg width="4" height="6" viewBox="0 0 4 6"><path d="M0 0v6L4 3z" fill="#a0a0a0" /></svg>
        </div>
        <div className="ml-[3px] flex h-[52px] gap-px">
          <div className="w-[3px] border-r border-b border-l border-r-[#a0a0a0] border-b-[#a0a0a0] border-l-white" />
          <div className="w-[3px] border-r border-b border-l border-r-[#a0a0a0] border-b-[#a0a0a0] border-l-white" />
        </div>
      </div>
      <div className="mt-px mb-[2px] flex w-[1343px] flex-col border-t-2 border-r border-b border-l border-t-[#787878] border-r-[#e0e0e0] border-b-[#e0e0e0] border-l-[#787878]">
        <div className="flex h-[61px] shrink-0">
          <div className="w-[1325px] bg-white pl-px"><Fit w={210}>Repository Service notifications are enabled.</Fit></div>
          <div className="flex grow flex-col items-center justify-between py-[5px]"><Chev d="u" c="#bbb" /><Chev d="d" c="#bbb" /></div>
        </div>
        <div className="flex h-[16px] shrink-0">
          <NavBtn d="M1 0h1v8H1zM7 0v8L3 4z" /><NavBtn d="M6 0v8L2 4z" /><NavBtn d="M2 0v8l4-4z" /><NavBtn d="M6 0h1v8H6zM1 0v8l4-4z" />
          {tabs.map(([t, w, cw], i) => (
            <div key={t} className={"flex shrink-0 items-center " + (i === 6 ? "bg-white" : "border-t border-black bg-[#f0f0f0]")} style={{ width: cw }}>
              <svg width={i === 0 ? 9 : 8} height="16" viewBox="0 0 8 16" className="block shrink-0">
                {i === 6 && <path d="M-2 0h3l6 16h-9z" fill="#f0f0f0" />}
                <path d="M1 0l6 16" stroke="#000" strokeWidth="1.200" />
                {i > 0 && <path d="M4 8L1 16" stroke="#000" />}
              </svg>
              <Fit w={w} className="mt-px">{t}</Fit>
            </div>
          ))}
          <svg width="6" height="16" viewBox="0 0 6 16" className="block shrink-0 bg-[#f0f0f0]"><path d="M0 0h6L1 16H0z" fill="#fff" /><path d="M6 0L1 16" stroke="#000" strokeWidth="1.200" /></svg>
          <div className="grow border-t border-r border-black" />
          <div className="ml-[3px] flex w-[181px] shrink-0 border-l border-black">
            <NavBtn d="M6 0v8L2 4z" />
            <div className="grow border border-t-white border-r-[#787878] border-b-[#787878] border-l-white bg-[#f0f0f0]" />
            <NavBtn d="M2 0v8l4-4z" />
          </div>
        </div>
      </div>
    </div>
  );
}

function Status() {
  return (
    <div className={"mt-[3px] flex h-[20px] shrink-0 gap-[2px] bg-[#f0f0f0] pt-[2px] text-[12px] leading-[16px] text-black " + UI}>
      <div className="w-[1133px] shrink-0 border border-[#a0a0a0] border-b-white pl-px"><Fit w={105}>Open this mapping.</Fit></div>
      <div className="flex w-[129px] shrink-0 items-center pl-px">
        <div className="flex h-[12px] w-[126px] border border-[#a0a0a0] border-r-white border-b-white pl-[39px]"><div className="h-[10px] w-[26px] bg-[#0000ff]" /></div>
      </div>
      <div className="w-[29px] shrink-0 border border-[#a0a0a0] border-b-white" />
      <div className="w-[34px] shrink-0 border border-[#a0a0a0] border-b-white pl-px"><Fit w={28}>NUM</Fit></div>
      <div className="grow border border-[#a0a0a0] border-b-white" />
    </div>
  );
}

const apps: { u: boolean; on?: boolean; i: React.ReactNode }[] = [
  { u: false, i: <><g fill="none" stroke="#fff" strokeWidth="1.200"><path d="M4.500 8.500h10v8h-10zM4 5.500V4M4 5.500h11V4M4 21v-1.500h11V21M18.500 4v17" /></g><rect x="17" y="8" width="3" height="3" fill="#fff" /></> },
  { u: false, i: <><circle cx="12" cy="12" r="11.500" fill="#1283d8" /><path d="M1 10C3-2 22-2 23.500 10c.5 5-6 7-9 5 3-4-1-8-5-7C4 9 2 14 4 19 1 17 0 13 1 10z" fill="#3cc8a8" /><path d="M1 11c2-6 9-8 13-5-5-1-8 3-7 8 1 5 7 8 13 6-7 7-19 3-19-9z" fill="#0c59a4" /></> },
  { u: true, i: <><path d="M1 3h8l2 3h12v15H1z" fill="#f0b020" /><rect x="1" y="8" width="22" height="13" fill="#ffd868" /><path d="M5 21v-8h14v8h-4v-4H9v4z" fill="#3c98e8" /></> },
  { u: false, i: <><path d="M7 6V2h10v4" fill="none" stroke="#20b0f0" strokeWidth="1.800" /><rect x="1" y="5" width="22" height="18" rx="2" fill="#f6f6f6" /><path d="M7.500 9h4v4h-4z" fill="#f04c20" /><path d="M12.500 9h4v4h-4z" fill="#78b818" /><path d="M7.500 14h4v4h-4z" fill="#10a0e8" /><path d="M12.500 14h4v4h-4z" fill="#f8b810" /></> },
  { u: false, i: <><path d="M12 23C4 23 0 17 1 11c0-3 1-5 3-7l1 3 4-1c3-1 5-2 6-6 5 3 8 8 8 13 0 6-5 10-11 10z" fill="#ff7818" /><path d="M15 0c1 4 6 5 6 11 0 4-3 6-5 6 2-4-1-8-5-8 3-2 4-5 4-9z" fill="#ffd030" /><circle cx="12" cy="13" r="5" fill="#8048d0" /><path d="M3 8c3 0 5 0 7 2-3 0-3 2-1 3 2 2 5 2 7 0 0 4-3 6-6 5-4 0-7-5-7-10z" fill="#ff5028" /></> },
  { u: true, i: <path d="M3 6v4c0 7 4 9 7 5 2-4 2-9 7-9 4 0 4 4 4 12" fill="none" stroke="#a8ccc0" strokeWidth="2" /> },
  { u: true, i: <><circle cx="12" cy="12" r="11.500" fill="#fcc934" /><path d="M2 6.200a11.500 11.500 0 0 0 9 17.300l5-9-4-2z" fill="#34a853" /><path d="M2 6.200L7.500 15 12 7h10A11.500 11.500 0 0 0 2 6.200z" fill="#ea4335" /><circle cx="12" cy="12" r="5.500" fill="#fff" /><circle cx="12" cy="12" r="4.300" fill="#4285f4" /></> },
  { u: true, on: true, i: <><circle cx="12" cy="12" r="11.500" fill="#0a8030" /><circle cx="12" cy="12" r="10" fill="#18b048" /><text x="12" y="18" textAnchor="middle" fontSize="16" fontWeight="bold" fill="#fff" fontFamily="Liberation Sans">D</text></> },
  { u: true, i: <><path d="M5 2c9-4 18 1 16 9-1 4-6 7-8 7l-2-3c4 0 7-3 6-6-1-4-6-5-11-3z" fill="#d83c18" /><path d="M12 3v13M8 6l8 12" stroke="#e8e8e8" strokeWidth="2.500" /><circle cx="7" cy="19" r="2.600" fill="none" stroke="#1878d0" strokeWidth="2" /><circle cx="14" cy="21" r="2.200" fill="none" stroke="#1878d0" strokeWidth="2" /></> },
];

function Taskbar() {
  return (
    <div className={"flex h-[40px] shrink-0 bg-[linear-gradient(90deg,#3d2723_0%,#3a2522_4%,#242427_25%,#302523_33%,#402a27_42%,#282526_50%,#28272a_55%,#4a2a27_66%,#55302d_71%,#421f20_80%,#30201f_83%,#212023_90%,#202022_100%)] text-white " + UI}>
      <div className="flex w-[48px] shrink-0 items-center justify-center">
        <svg width="17" height="17" viewBox="0 0 17 17"><path d="M0 2.500L7.500 1.500V8H0zM8.500 1.300L17 0v8H8.500zM0 9h7.500v6.500L0 14.500zM8.500 9H17v8l-8.500-1.200z" fill="#fff" /></svg>
      </div>
      <div className="flex w-[288px] shrink-0 items-center border border-[#c8c8c8] bg-[#f2f2f2] text-[15px] text-[#444]">
        <svg width="18" height="18" viewBox="0 0 18 18" className="ml-[10px] block"><circle cx="11" cy="6.500" r="5.300" fill="none" stroke="#222" strokeWidth="1.300" /><path d="M7 10.500L1 16.500" stroke="#222" strokeWidth="1.300" /></svg>
        <Fit w={128} className="ml-[11px]">Type here to search</Fit>
      </div>
      <div className="flex shrink-0 pl-px">
        {apps.map((a, i) => (
          <div key={i} className={"flex w-[49px] shrink-0 flex-col items-center " + (a.on ? "bg-[#58575a]" : "")}>
            <div className="flex h-[38px] items-center"><svg width="24" height="24" viewBox="0 0 24 24" className="block">{a.i}</svg></div>
            {a.u && <div className={a.on ? "h-[2px] w-full bg-[#76b9ed]" : "h-[2px] w-[40px] bg-[#76b9ed]"} />}
          </div>
        ))}
      </div>
      <div className="ml-auto flex items-center text-[14px]">
        <svg width="24" height="24" viewBox="0 0 24 24" className="block"><circle cx="12" cy="14" r="9" fill="#f8a020" /><path d="M2 10a3 3 0 0 1 1-5 4 4 0 0 1 7 0 3 3 0 0 1 3 5z" fill="#c8dcf8" /><path d="M12 22a3 3 0 0 1 0-5 4 4 0 0 1 7 0 3 3 0 0 1 4 5z" fill="#d8e6fc" /><circle cx="18" cy="6" r="6" fill="#d02828" /><text x="18" y="9" textAnchor="middle" fontSize="9" fill="#fff" fontFamily="Noto Sans">1</text></svg>
        <Fit w={29} className="ml-[8px]">28°C</Fit>
        <Fit w={75} className="ml-[9px]">Partly sunny</Fit>
        <svg width="82" height="20" viewBox="1157 738 82 20" className="ml-[23px] block">
          <g fill="none" stroke="#fff" strokeWidth="1.200">
            <path d="M1159.500 751l5.500-5.500 5.500 5.500" />
            <path d="M1185.500 744.500h6v7h-6zM1191.500 746.500l3-1v5l-3-1M1185 741.500q4-2 7 0M1185 755q4 2 7 0" />
            <path d="M1209 743.500h12v8h-12M1215 751.500v4M1211 755.500h8M1205.500 742.500h4v4h-4zM1207.500 746.500v9" />
            <path d="M1229 746v5h2.500l3.500 3.500v-12l-3.500 3.500z" />
          </g>
        </svg>
        <svg width="12" height="12" viewBox="0 0 12 12" className="mt-[8px] -ml-[6px] block"><circle cx="6" cy="6" r="5" fill="#e02828" /><path d="M4 4l4 4M8 4l-4 4" stroke="#fff" strokeWidth="1.300" /></svg>
        <div className="ml-[8px] flex w-[54px] flex-col items-center text-[12px] leading-[18px]">
          <Fit w={48}>12:59 PM</Fit>
          <Fit w={53}>6/14/2024</Fit>
        </div>
        <svg width="18" height="18" viewBox="0 0 18 18" className="ml-[17px] block"><path d="M1.500 2.500h15v11H11v3l-3-3H1.500z" fill="none" stroke="#fff" strokeWidth="1.200" /></svg>
        <div className="mr-[4px] ml-[18px] h-[40px] w-px bg-[#6a6a6c]" />
      </div>
    </div>
  );
}

export default function App() {
  return (
    <div className="flex h-[768px] w-[1366px] flex-col overflow-hidden bg-white">
      <TopBars />
      <div className="flex h-[507px] shrink-0 justify-between">
        <TreePanel />
        <Workspace />
      </div>
      <Output />
      <Status />
      <Taskbar />
    </div>
  );
}
